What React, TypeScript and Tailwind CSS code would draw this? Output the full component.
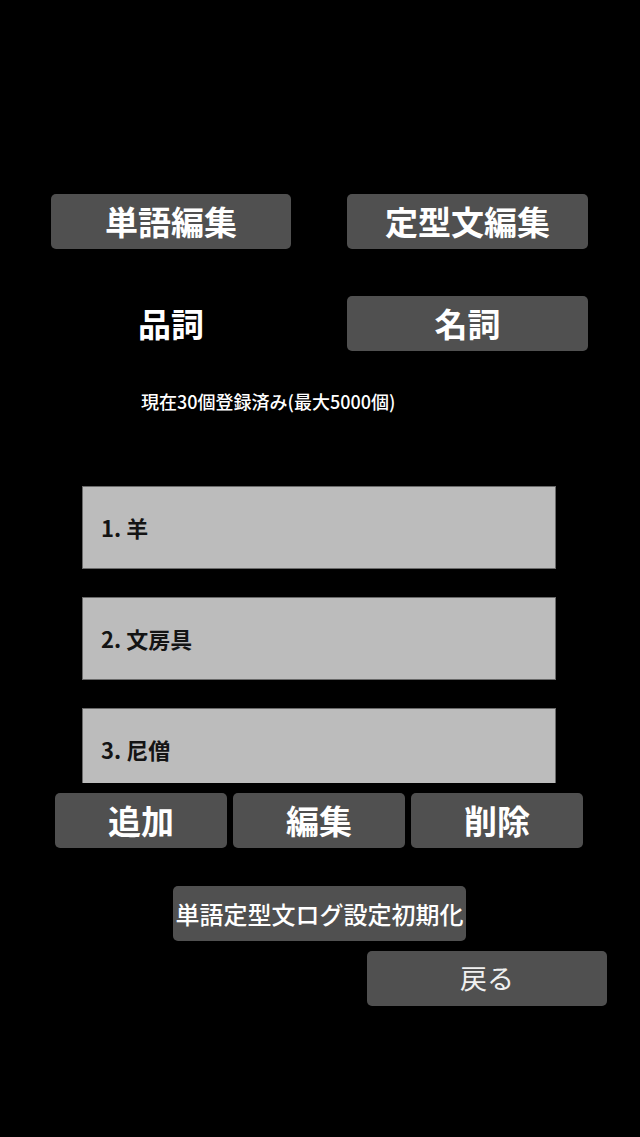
const font = { fontFamily: '"Noto Sans CJK JP", "Noto Sans", sans-serif' };

const words = ["羊", "文房具", "尼僧"];

const GrayButton = ({
  label,
  className,
  textClass,
}: {
  label: string;
  className: string;
  textClass: string;
}) => (
  <button
    className={`flex items-center justify-center rounded-[5px] bg-[#505050] whitespace-nowrap ${className} ${textClass}`}
  >
    {label}
  </button>
);

const App = () => {
  return (
    <div
      className="min-h-[1137px] w-full bg-black pt-[194px] text-white"
      style={font}
    >
      {/* mode tabs */}
      <div className="flex gap-[56px] pl-[51px]">
        <GrayButton
          label="単語編集"
          className="h-[55px] w-[240px]"
          textClass="text-[33px] font-bold"
        />
        <GrayButton
          label="定型文編集"
          className="h-[55px] w-[241px]"
          textClass="text-[33px] font-bold"
        />
      </div>

      {/* part of speech */}
      <div className="mt-[47px] flex gap-[56px] pl-[51px]">
        <div className="flex h-[55px] w-[240px] items-center justify-center text-[33px] font-bold">
          品詞
        </div>
        <GrayButton
          label="名詞"
          className="h-[55px] w-[241px]"
          textClass="text-[33px] font-bold"
        />
      </div>

      <p className="mt-[37px] pl-[141px] text-[18px] leading-[26px] font-medium">
        現在30個登録済み(最大5000個)
      </p>

      {/* word list */}
      <div className="mt-[72px] ml-[82px] flex h-[297px] w-[474px] flex-col gap-[28px] overflow-hidden">
        {words.map((w, i) => (
          <div
            key={w}
            className="flex h-[83px] shrink-0 items-center border border-[#6a6a6a] bg-[#bcbcbc] pl-[18px] text-[22px] font-semibold text-[#141414]"
          >
            {i + 1}. {w}
          </div>
        ))}
      </div>

      {/* actions */}
      <div className="mt-[10px] flex gap-[6px] pl-[55px]">
        {["追加", "編集", "削除"].map((l) => (
          <GrayButton
            key={l}
            label={l}
            className="h-[55px] w-[172px]"
            textClass="text-[33px] font-bold"
          />
        ))}
      </div>

      <div className="mt-[38px] pl-[173px]">
        <GrayButton
          label="単語定型文ログ設定初期化"
          className="h-[55px] w-[293px]"
          textClass="text-[24px] font-medium"
        />
      </div>

      <div className="mt-[10px] pl-[367px]">
        <GrayButton
          label="戻る"
          className="h-[55px] w-[240px]"
          textClass="text-[27px] font-normal text-[#f0f0f0]"
        />
      </div>
    </div>
  );
};

export default App;
